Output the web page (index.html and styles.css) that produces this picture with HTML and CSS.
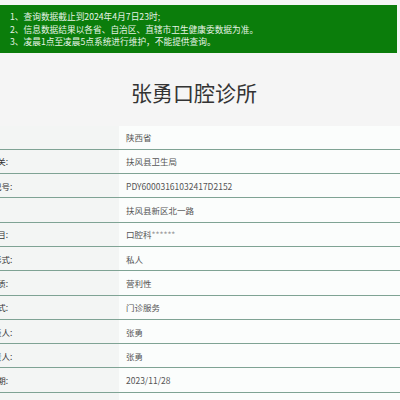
FILE: index.html
```html
<!DOCTYPE html>
<html lang="zh-CN">
<head>
<meta charset="utf-8">
<title>张勇口腔诊所</title>
<link rel="stylesheet" href="styles.css">
</head>
<body>
<div class="notice">
  <p>1、查询数据截止到2024年4月7日23时;</p>
  <p>2、信息数据结果以各省、自治区、直辖市卫生健康委数据为准。</p>
  <p>3、凌晨1点至凌晨5点系统进行维护，不能提供查询。</p>
</div>
<h1 class="title">张勇口腔诊所</h1>
<div class="info">
  <div class="row"><div class="label">省份:</div><div class="value">陕西省</div></div>
  <div class="row"><div class="label">登记机关:</div><div class="value">扶风县卫生局</div></div>
  <div class="row"><div class="label">执业登记号:</div><div class="value">PDY60003161032417D2152</div></div>
  <div class="row"><div class="label">地址:</div><div class="value">扶风县新区北一路</div></div>
  <div class="row"><div class="label">诊疗科目:</div><div class="value">口腔科<span class="mask">******</span></div></div>
  <div class="row"><div class="label">所有制形式:</div><div class="value">私人</div></div>
  <div class="row"><div class="label">经营性质:</div><div class="value">营利性</div></div>
  <div class="row"><div class="label">服务方式:</div><div class="value">门诊服务</div></div>
  <div class="row"><div class="label">法定代表人:</div><div class="value">张勇</div></div>
  <div class="row"><div class="label">主要负责人:</div><div class="value">张勇</div></div>
  <div class="row"><div class="label">发证日期:</div><div class="value">2023/11/28</div></div>
  <div class="row"><div class="label">有效期限:</div><div class="value">2028/11/27</div></div>
</div>
</body>
</html>
```
FILE: styles.css
```css
html, body {
  margin: 0;
  padding: 0;
  background: #f5f5f5;
  font-family: "Noto Sans CJK SC", "Noto Sans", sans-serif;
  overflow: hidden;
}
.notice {
  margin: 5px 3px 0 0;
  padding: 6px 10px 4px;
  background: #0b7d0b;
  color: #e6f3e6;
  font-size: 8.7px;
  line-height: 12.5px;
}
.notice p {
  margin: 0;
}
.title {
  margin: 24px 0 0;
  padding-right: 12px;
  height: 49px;
  line-height: 30px;
  text-align: center;
  font-size: 21px;
  font-weight: normal;
  color: #333;
}
.info {
  margin-left: -139px;
}
.row {
  display: flex;
  height: 24.3px;
  box-sizing: border-box;
  border-bottom: 1px solid #7fa394;
  font-size: 8.5px;
}
.label {
  flex: none;
  width: 258px;
  background: #f3f5f4;
  color: #333;
  text-align: center;
  display: flex;
  align-items: center;
  justify-content: center;
}
.value {
  flex: 1;
  background: #fbfdfc;
  color: #555;
  padding-left: 7px;
  display: flex;
  align-items: center;
}
.mask {
  color: #999;
}
```
